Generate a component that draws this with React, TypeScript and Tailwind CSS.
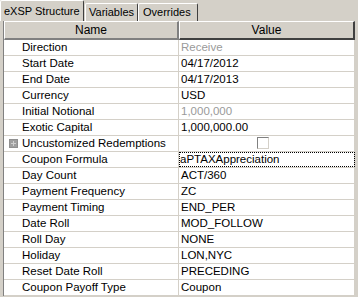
import React from "react";

type Row = { name: string; value?: string; gray?: boolean; check?: boolean; plus?: boolean; focus?: boolean };

const rows: Row[] = [
  { name: "Direction", value: "Receive", gray: true },
  { name: "Start Date", value: "04/17/2012" },
  { name: "End Date", value: "04/17/2013" },
  { name: "Currency", value: "USD" },
  { name: "Initial Notional", value: "1,000,000", gray: true },
  { name: "Exotic Capital", value: "1,000,000.00" },
  { name: "Uncustomized Redemptions", check: true, plus: true },
  { name: "Coupon Formula", value: "aPTAXAppreciation", focus: true },
  { name: "Day Count", value: "ACT/360" },
  { name: "Payment Frequency", value: "ZC" },
  { name: "Payment Timing", value: "END_PER" },
  { name: "Date Roll", value: "MOD_FOLLOW" },
  { name: "Roll Day", value: "NONE" },
  { name: "Holiday", value: "LON,NYC" },
  { name: "Reset Date Roll", value: "PRECEDING" },
  { name: "Coupon Payoff Type", value: "Coupon" },
];

export default function App() {
  return (
    <div
      className="w-[358px] h-[297px] overflow-hidden bg-[#d4d0c8] text-[11.5px] text-black"
      style={{ fontFamily: "Tahoma, 'Liberation Sans', Arial, sans-serif" }}
    >
      {/* tabs */}
      <div className="flex items-end h-[21px]">
        <div className="relative z-10 h-[21px] w-[84px] border-t border-l border-white border-r border-r-[#404040] rounded-t-[2px] bg-[#d4d0c8] flex items-start pt-[2px] pl-[3px] text-[11px] leading-[16px] whitespace-nowrap overflow-hidden">
          eXSP Structure
        </div>
        <div className="h-[18px] ml-[1px] w-[53px] border-t border-l border-white border-r border-r-[#404040] rounded-t-[2px] flex items-start pl-[3px] text-[11px] leading-[16px] whitespace-nowrap overflow-hidden">
          Variables
        </div>
        <div className="h-[18px] w-[60px] border-t border-l border-white border-r border-r-[#404040] rounded-t-[2px] flex items-start pl-[4px] text-[11px] leading-[16px] whitespace-nowrap overflow-hidden">
          Overrides
        </div>
      </div>
      {/* grid */}
      <div className="ml-[3px] mr-[3px] border-l border-[#808080] bg-white">
        <div className="flex h-[19px] bg-[#d4d0c8]">
          <div className="w-[175px] border-t border-l border-white border-b-2 border-r-2 border-b-[#808080] border-r-[#808080] flex items-center justify-center text-[12px]">
            Name
          </div>
          <div className="flex-1 border-t border-l border-white border-b-2 border-r-2 border-b-[#404040] border-r-[#404040] flex items-center justify-center text-[12px]">
            Value
          </div>
        </div>
        {rows.map((r, i) => (
          <div key={i} className="flex h-[16px] border-b border-[#d4d0c8] bg-white leading-[15px]">
            <div className="w-[175px] border-r border-[#d4d0c8] flex items-center">
              <div className="w-[18px] flex items-center justify-center">
                {r.plus && (
                  <div className="w-[9px] h-[9px] bg-[#a0a0a0] border border-[#909090] flex items-center justify-center">
                    <div className="relative w-[5px] h-[5px]">
                      <div className="absolute left-0 top-[2px] w-[5px] h-[1px] bg-[#d0d0d0]" />
                      <div className="absolute left-[2px] top-0 w-[1px] h-[5px] bg-[#d0d0d0]" />
                    </div>
                  </div>
                )}
              </div>
              <span className="whitespace-nowrap">{r.name}</span>
            </div>
            <div
              className={
                "flex-1 flex items-center border-r border-[#d4d0c8] " +
                (r.focus ? "outline outline-1 outline-dotted outline-black -outline-offset-1 pl-[1px]" : "pl-[2px]")
              }
            >
              {r.check ? (
                <div className="ml-[76px] mt-[-2px] w-[12px] h-[12px] bg-white border border-t-[#808080] border-l-[#808080] border-b-[#d4d0c8] border-r-[#d4d0c8]" />
              ) : (
                <span className={"whitespace-nowrap " + (r.gray ? "text-[#9a9a9a]" : "")}>{r.value}</span>
              )}
            </div>
          </div>
        ))}
      </div>
    </div>
  );
}
